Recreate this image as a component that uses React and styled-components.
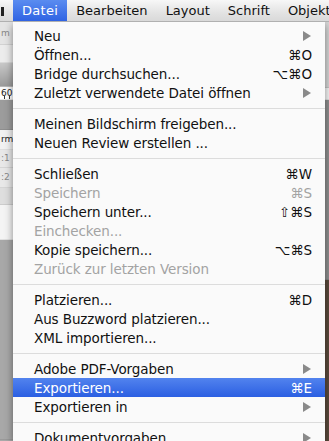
import React from 'react';
import styled, { createGlobalStyle } from 'styled-components';

const GlobalStyle = createGlobalStyle`
  html, body {
    margin: 0;
    padding: 0;
    background: #a9a9a9;
    overflow: hidden;
  }
  body {
    font-family: "DejaVu Sans", "Liberation Sans", sans-serif;
  }
`;

const menuItems = [
  { label: 'Neu', sub: true },
  { label: 'Öffnen...', key: '⌘O' },
  { label: 'Bridge durchsuchen...', key: '⌥⌘O' },
  { label: 'Zuletzt verwendete Datei öffnen', sub: true },
  { sep: true },
  { label: 'Meinen Bildschirm freigeben...' },
  { label: 'Neuen Review erstellen ...' },
  { sep: true },
  { label: 'Schließen', key: '⌘W' },
  { label: 'Speichern', key: '⌘S', disabled: true },
  { label: 'Speichern unter...', key: '⇧⌘S' },
  { label: 'Einchecken...', disabled: true },
  { label: 'Kopie speichern...', key: '⌥⌘S' },
  { label: 'Zurück zur letzten Version', disabled: true },
  { sep: true },
  { label: 'Platzieren...', key: '⌘D' },
  { label: 'Aus Buzzword platzieren...' },
  { label: 'XML importieren...' },
  { sep: true },
  { label: 'Adobe PDF-Vorgaben', sub: true },
  { label: 'Exportieren...', key: '⌘E', active: true },
  { label: 'Exportieren in', sub: true },
  { sep: true },
  { label: 'Dokumentvorgaben', sub: true },
];

const titles = ['Datei', 'Bearbeiten', 'Layout', 'Schrift', 'Objekt'];

function App() {
  return (
    <Screen>
      <GlobalStyle />
      <MenuBar>
        <AppStub />
        {titles.map((t, i) => (
          <Title key={t} open={i === 0}>{t}</Title>
        ))}
      </MenuBar>
      <Body>
        <LeftPanel>
          <Strip tone="#e4e4e4" h={23}><Tiny>m</Tiny></Strip>
          <Strip tone="#ececec" h={18} />
          <Strip tone="linear-gradient(#c8c8c8, #9a9a9a)" h={24} />
          <Ruler h={13}><Tiny dark>60</Tiny></Ruler>
          <Strip tone="#9c9c9c" h={30} />
          <Strip tone="#f2f2f2" h={20}><Tiny dark>rmi</Tiny></Strip>
          <Strip tone="#e8e8e8" h={18}><Tiny>:1</Tiny></Strip>
          <Strip tone="#e8e8e8" h={20}><Tiny>:2</Tiny></Strip>
          <Strip tone="#dedede" h={17} />
          <Strip tone="#f4f4f4" h={35} />
          <Strip tone="#a8a8a8" h={200} />
        </LeftPanel>
        <Menu>
          {menuItems.map((it, i) =>
            it.sep ? (
              <Separator key={i} />
            ) : (
              <Item key={i} active={it.active} disabled={it.disabled}>
                <span>{it.label}</span>
                {it.key && <span>{it.key}</span>}
                {it.sub && <Arrow active={it.active} />}
              </Item>
            )
          )}
        </Menu>
        <RightPanel>
          <Strip tone="#d6d6d6" h={66} />
          <Strip tone="#f6f6f6" h={12} />
          <Strip tone="#8f8f8f" h={180} />
          <Strip tone="#5b4a3c" h={200} />
        </RightPanel>
      </Body>
    </Screen>
  );
}

export default App;

const Screen = styled.div`
  width: 329px;
  height: 441px;
  overflow: hidden;
  display: flex;
  flex-direction: column;
`;

const MenuBar = styled.div`
  height: 22px;
  display: flex;
  align-items: stretch;
  background: linear-gradient(#f7f7f7, #e3e3e3 60%, #d9d9d9);
  border-bottom: 1px solid #b0b0b0;
  box-sizing: border-box;
  font-size: 13px;
  color: #111;
  white-space: nowrap;
  overflow: hidden;
  position: relative;
  z-index: 2;
`;

const AppStub = styled.div`
  width: 13px;
  flex-shrink: 0;
  background: linear-gradient(90deg, transparent 0 1px, #222 1px 4px, transparent 4px);
  background-size: 100% 9px;
  background-position: 0 7px;
  background-repeat: no-repeat;
`;

const Title = styled.div`
  display: flex;
  align-items: center;
  flex-shrink: 0;
  padding: 0 ${(p) => (p.open ? '9px' : '8px')};
  margin-right: ${(p) => (p.open ? '1px' : '2px')};
  letter-spacing: ${(p) => (p.open ? '0.3px' : '0')};
  background: ${(p) => (p.open ? 'linear-gradient(#5a8cf0, #2f63e3)' : 'transparent')};
  color: ${(p) => (p.open ? '#fff' : '#111')};
`;

const Body = styled.div`
  flex: 1;
  display: flex;
  min-height: 0;
`;

const LeftPanel = styled.div`
  width: 13px;
  display: flex;
  flex-direction: column;
  flex-shrink: 0;
  overflow: hidden;
`;

const RightPanel = styled.div`
  flex: 1;
  display: flex;
  flex-direction: column;
  overflow: hidden;
`;

const Strip = styled.div`
  height: ${(p) => p.h}px;
  flex-shrink: 0;
  box-sizing: border-box;
  background: ${(p) => p.tone};
  border-bottom: 1px solid rgba(0, 0, 0, 0.08);
  display: flex;
  align-items: center;
  overflow: hidden;
`;

const Ruler = styled(Strip)`
  background: repeating-linear-gradient(90deg, #fff 0 4px, #333 4px 5px);
  background-size: 100% 3px;
  background-position: bottom;
  background-repeat: no-repeat;
  background-color: #fafafa;
`;

const Tiny = styled.span`
  font-size: 9px;
  line-height: 1;
  color: ${(p) => (p.dark ? '#222' : '#888')};
  padding-left: 1px;
`;

const Menu = styled.div`
  width: 312px;
  flex-shrink: 0;
  background: rgba(252, 252, 252, 0.98);
  box-shadow: 0 3px 8px rgba(0, 0, 0, 0.45);
  padding-top: 4px;
  position: relative;
  z-index: 1;
`;

const Item = styled.div`
  height: 19px;
  display: flex;
  align-items: center;
  justify-content: space-between;
  padding: 0 13px 0 21px;
  font-size: 13.5px;
  letter-spacing: -0.1px;
  color: ${(p) => (p.active ? '#fff' : p.disabled ? '#a3a3a3' : '#111')};
  background: ${(p) => (p.active ? 'linear-gradient(#5283ee, #2b5fe2)' : 'transparent')};
  white-space: nowrap;
`;

const Arrow = styled.span`
  width: 0;
  height: 0;
  border-top: 5px solid transparent;
  border-bottom: 5px solid transparent;
  border-left: 8px solid ${(p) => (p.active ? '#fff' : '#8a8a8a')};
  margin-right: 1px;
`;

const Separator = styled.div`
  height: 12px;
  display: flex;
  align-items: center;
  &::after {
    content: '';
    flex: 1;
    height: 1px;
    background: #dcdcdc;
  }
`;
